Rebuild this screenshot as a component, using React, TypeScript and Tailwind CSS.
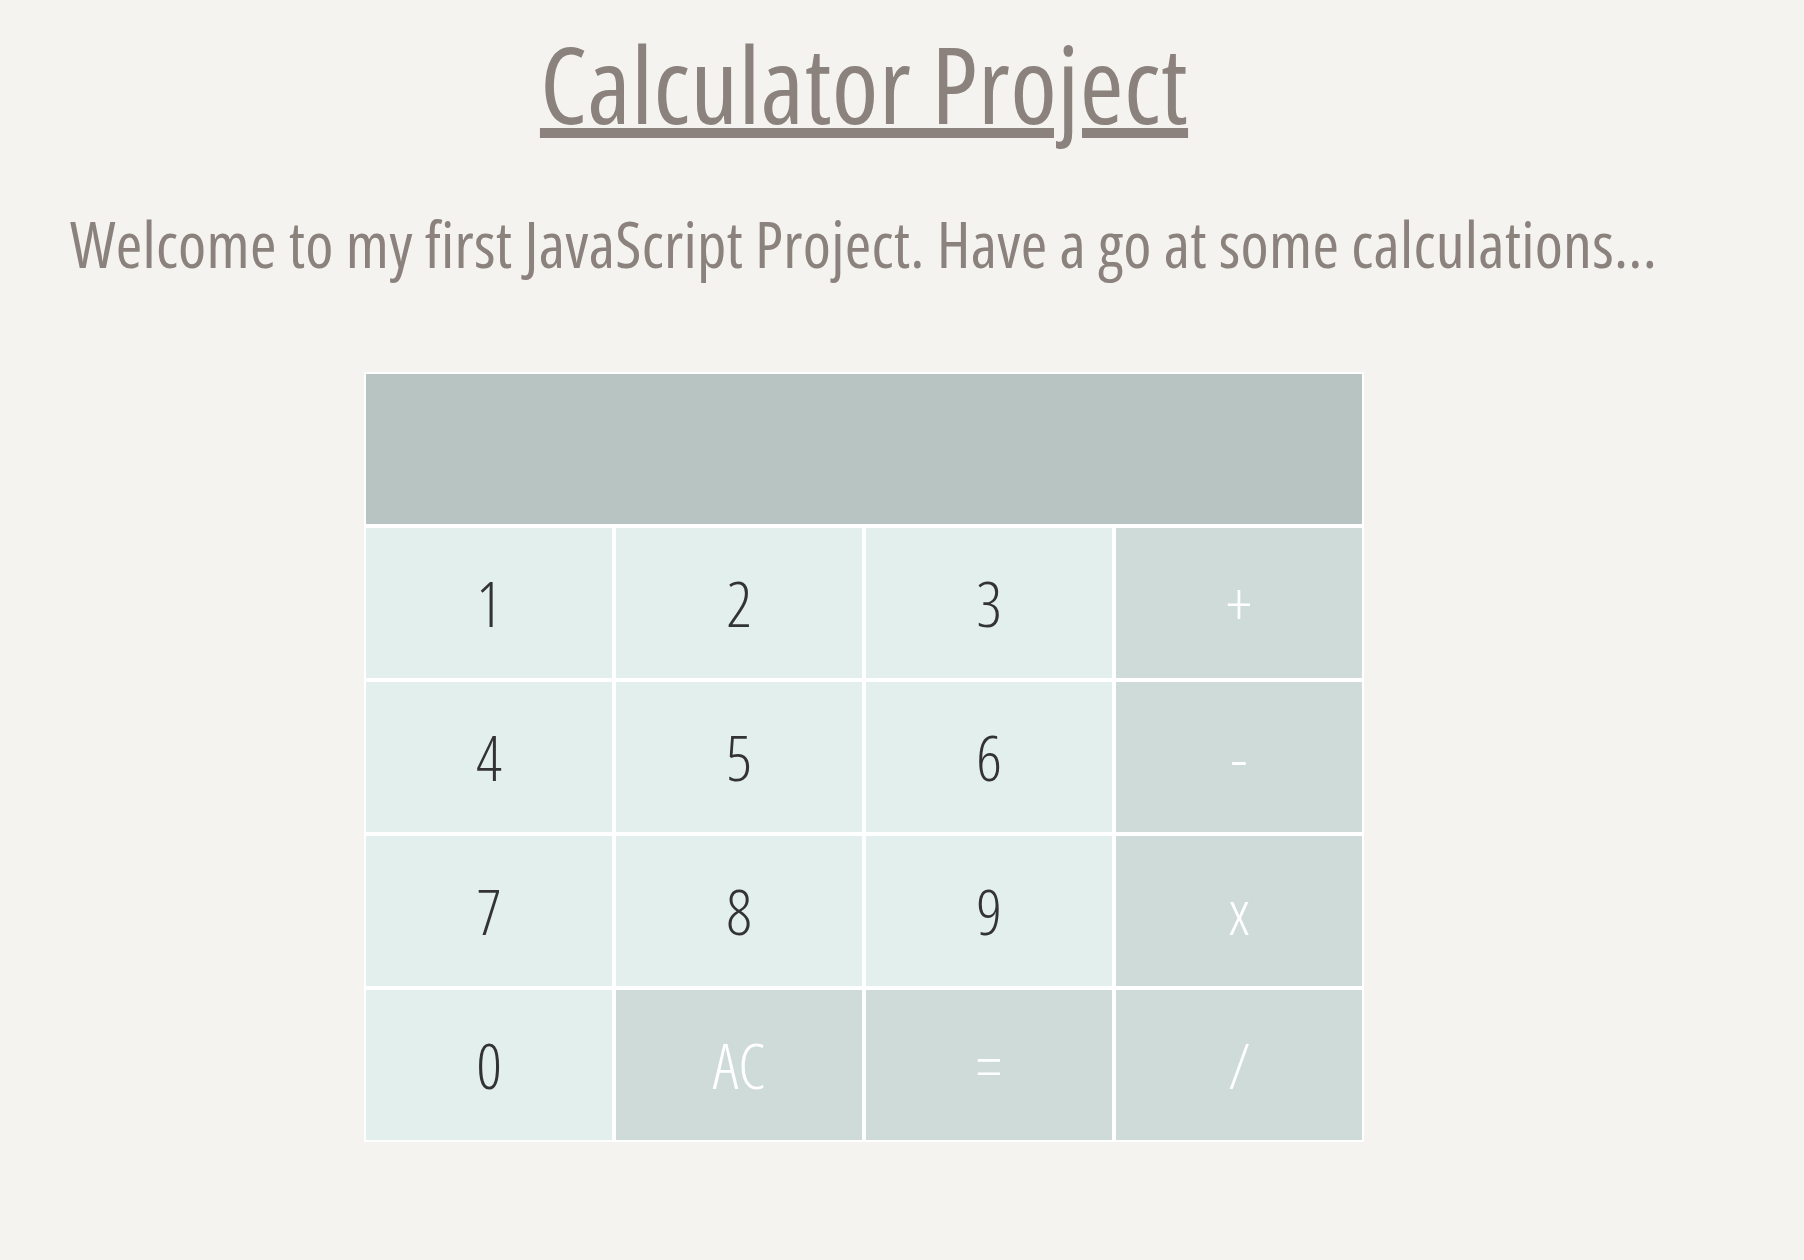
const keys: { label: string; op?: boolean }[] = [
  { label: "1" },
  { label: "2" },
  { label: "3" },
  { label: "+", op: true },
  { label: "4" },
  { label: "5" },
  { label: "6" },
  { label: "-", op: true },
  { label: "7" },
  { label: "8" },
  { label: "9" },
  { label: "x", op: true },
  { label: "0" },
  { label: "AC", op: true },
  { label: "=", op: true },
  { label: "/", op: true },
];

export default function App() {
  return (
    <div className="min-h-[1260px] bg-[#f4f3ef] pl-16 font-['Open_Sans',sans-serif] font-stretch-condensed">
      <div className="w-[1600px] pt-[23px]">
        <h1 className="text-center text-[106px] leading-[120px] font-normal tracking-[0.004em] text-[#8b827d] underline decoration-[10px] underline-offset-[4px]">
          Calculator Project
        </h1>
        <p className="mt-[61px] whitespace-nowrap pl-[6px] text-[64px] leading-[80px] font-normal tracking-[0.004em] text-[#8b827d]">
          Welcome to my first JavaScript Project. Have a go at some calculations...
        </p>

        <div className="mx-auto mt-[88px] grid w-[1000px] grid-cols-4 font-light">
          <div className="col-span-4 h-[154px] border-2 border-white bg-[#b8c4c2]" />
          {keys.map((k) => (
            <button
              key={k.label}
              className={
                k.op
                  ? "flex h-[154px] items-center justify-center border-2 border-white bg-[#cedbd9] text-[63px] text-white"
                  : "flex h-[154px] items-center justify-center border-2 border-white bg-[#e2efec] text-[63px] text-[#333333]"
              }
            >
              {k.label}
            </button>
          ))}
        </div>
      </div>
    </div>
  );
}
